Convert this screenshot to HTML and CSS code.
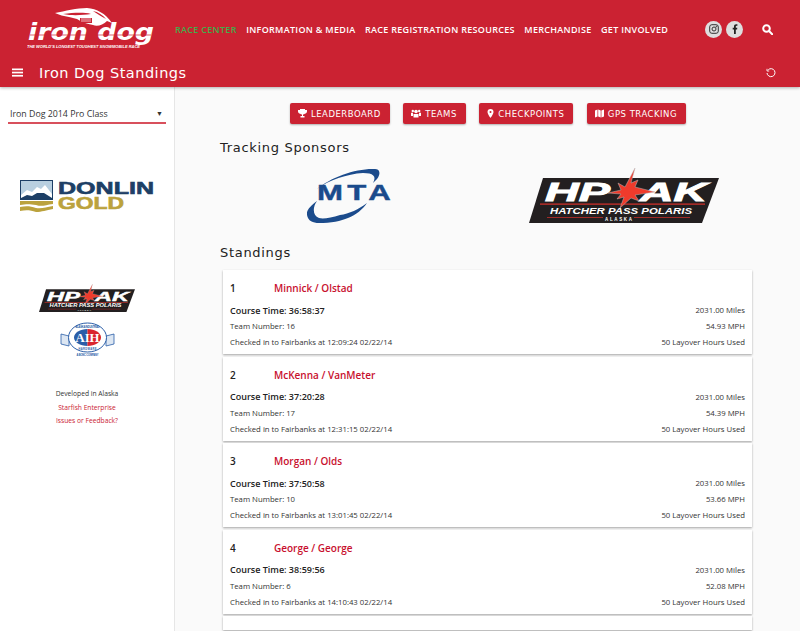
FILE: index.html
```html
<!DOCTYPE html>
<html lang="en">
<head>
  <meta charset="UTF-8" />
  <title>Iron Dog Standings</title>
  <link rel="stylesheet" href="styles.css">
</head>
<body>
  <header class="header">
    <div class="topbar">
      <svg class="logo" width="127" height="42" viewBox="0 -2 127 42">
        <path d="M28 3C38 1 50 -2 60 -2C70 -1 78 3 85 13L80 11C76 15 70 17 66 15C60 14 54 12 50 9L42 7C37 6 32 5 28 3Z" fill="#fff"/>
        <path d="M36 4C46 3 56 2 64 4C56 5 46 6 36 4Z" fill="#cb2232"/>
        <path d="M66 1C71 2 76 5 79 9C74 6 70 4 66 1Z" fill="#cb2232"/>
        <rect x="53" y="8" width="12" height="5" fill="#cb2232"/>
        <path d="M54 9H64M54 11H64" stroke="#fff" stroke-width=".7"/>
        <text x="1" y="30" class="logo-name" textLength="126" lengthAdjust="spacingAndGlyphs">iron dog</text>
        <path d="M3 25H124" stroke="#cb2232" stroke-width=".7"/>
        <text x="0" y="38" class="logo-tag" textLength="113" lengthAdjust="spacingAndGlyphs">THE WORLD'S LONGEST TOUGHEST SNOWMOBILE RACE</text>
      </svg>
      <nav class="nav">
        <a class="nav-link active">RACE CENTER</a>
        <a class="nav-link">INFORMATION &amp; MEDIA</a>
        <a class="nav-link">RACE REGISTRATION RESOURCES</a>
        <a class="nav-link">MERCHANDISE</a>
        <a class="nav-link">GET INVOLVED</a>
      </nav>
      <div class="social">
        <span class="social-dot">
          <svg width="10" height="10" viewBox="0 0 10 10" fill="none" stroke="#333" stroke-width="1"><rect x=".7" y=".7" width="8.600" height="8.600" rx="2.200"/><circle cx="5" cy="5" r="2"/><circle cx="7.500" cy="2.500" r=".4"/></svg>
        </span>
        <span class="social-dot">
          <svg width="10" height="10" viewBox="0 0 10 10" fill="#222"><path d="M4 10V5.500H2.700V3.800H4V2.600C4 1 4.900 .2 6.200 .2H7.400V1.800H6.600C6 1.800 5.800 2.100 5.800 2.600V3.800H7.300L7.100 5.500H5.800V10Z"/></svg>
        </span>
      </div>
      <svg class="search" width="11" height="11" viewBox="0 0 11 11" fill="none" stroke="#fff" stroke-width="2"><circle cx="4.500" cy="4.500" r="3.300"/><path d="M7 7L10.200 10.200" stroke-linecap="round"/></svg>
    </div>
    <div class="subbar">
      <svg class="menu" width="11" height="9" viewBox="0 0 11 9" fill="#fff"><rect y=".5" width="11" height="1.700"/><rect y="3.700" width="11" height="1.700"/><rect y="6.900" width="11" height="1.700"/></svg>
      <h1 class="page-title">Iron Dog Standings</h1>
      <svg class="refresh" width="10" height="10" viewBox="0 0 10 10" fill="none" stroke="#fff" stroke-width="1"><path d="M2.300 1.700A4 4 0 1 1 1 5"/><path d="M1 .8V3H3.200" stroke-width=".9"/></svg>
    </div>
  </header>

  <div class="layout">
    <aside class="sidebar">
      <div class="class-select">
        <span>Iron Dog 2014 Pro Class</span>
        <span class="arrow">▼</span>
      </div>

      <svg class="donlin" width="135" height="33" viewBox="0 0 135 33">
        <rect x=".5" y=".5" width="32" height="19" fill="#b8cfe0" stroke="#1d3f66"/>
        <path d="M1 15L7 10L12 12L17 7L21 9L25 5L32 14V20H1Z" fill="#fff"/>
        <path d="M1 18L7 15L12 16L17 13L24 13L32 18V20H1Z" fill="#1d3f66"/>
        <path d="M0 21H33V24C25 25 22 27 16 25C10 24 6 24 0 25Z" fill="#bba23d"/>
        <path d="M0 27C6 26 10 26 16 28C22 29 26 27 33 26V29C26 30 22 32 16 32C10 30 6 30 0 31Z" fill="#bba23d"/>
        <text x="38" y="14" class="donlin-name" textLength="96" lengthAdjust="spacingAndGlyphs">DONLIN</text>
        <text x="38" y="29" class="donlin-gold" textLength="66" lengthAdjust="spacingAndGlyphs">GOLD</text>
      </svg>

      <svg class="hpak-small" width="96" height="28" viewBox="0 0 190 55">
        <polygon points="14,10 190,10 173,55 0,55" fill="#231f20"/>
        <text x="16" y="33" class="hp-big" textLength="65" lengthAdjust="spacingAndGlyphs">HP</text>
        <text x="111" y="33" class="hp-big" textLength="67" lengthAdjust="spacingAndGlyphs">AK</text>
        <rect x="11" y="35.500" width="165" height="1.200" fill="#d9312b"/>
        <polygon points="106,0 102,15 109,12 106,19 126,24 106,27 110,33 102,30 91,40 95,29 88,31 92,26 79,25 92,22 89,15 96,19" fill="#ef3b2c" stroke="#bbb" stroke-width=".5"/>
        <text x="21" y="46" class="hp-mid" textLength="142" lengthAdjust="spacingAndGlyphs">HATCHER PASS POLARIS</text>
        <rect x="18" y="49" width="56" height=".7" fill="#d9312b"/>
        <rect x="105" y="49" width="56" height=".7" fill="#d9312b"/>
        <text x="76" y="52.500" class="hp-small" textLength="27">ALASKA</text>
      </svg>

      <svg class="aih" width="55" height="34" viewBox="0 0 55 34">
        <path d="M1 12L9 14V24L1 22ZM54 12L46 14V24L54 22Z" fill="#dce6f2" stroke="#2a5ea8" stroke-width=".8"/>
        <ellipse cx="27.500" cy="15.500" rx="19" ry="14.500" fill="#fff" stroke="#2a5ea8"/>
        <path d="M27.500 7C20 7 14 11 14 15.500C14 20 20 24 27.500 24Z" fill="#2a5ea8"/>
        <path d="M27.500 7C35 7 41 11 41 15.500C41 20 35 24 27.500 24Z" fill="#d9262e"/>
        <text x="27.500" y="20" class="aih-text" text-anchor="middle" textLength="24" lengthAdjust="spacingAndGlyphs">AIH</text>
        <text x="27.500" y="5.600" class="aih-ring" text-anchor="middle" textLength="24">ALASKA INDUSTRIAL</text>
        <text x="27.500" y="28" class="aih-ring" text-anchor="middle" textLength="18">HARDWARE</text>
        <text x="27.500" y="33.500" class="aih-ring" text-anchor="middle" textLength="22">A BONC COMPANY</text>
      </svg>

      <div class="credits">
        <p>Developed in Alaska</p>
        <a>Starfish Enterprise</a>
        <a>Issues or Feedback?</a>
      </div>
    </aside>

    <main class="content">
      <div class="tabs">
        <a class="tab">
          <svg width="9" height="9" viewBox="0 0 9 9" fill="#fff"><path d="M2 0H7V1H9V2.500C9 3.800 8 4.500 6.800 4.700C6.400 5.200 5.800 5.500 5 5.600V7H6.500V8.500H2.500V7H4V5.600C3.200 5.500 2.600 5.200 2.200 4.700C1 4.500 0 3.800 0 2.500V1H2Z"/></svg>
          LEADERBOARD
        </a>
        <a class="tab">
          <svg width="10" height="9" viewBox="0 0 10 9" fill="#fff"><circle cx="5" cy="2.500" r="1.800"/><circle cx="1.800" cy="2" r="1.200"/><circle cx="8.200" cy="2" r="1.200"/><path d="M2.500 5H7.500V8.500H2.500Z"/><path d="M0 3.800H2V7H0ZM8 3.800H10V7H8Z"/></svg>
          TEAMS
        </a>
        <a class="tab">
          <svg width="7" height="9" viewBox="0 0 7 9" fill="#fff"><path fill-rule="evenodd" d="M3.500 0A3 3 0 0 1 6.500 3C6.500 5 3.500 9 3.500 9S.5 5 .5 3A3 3 0 0 1 3.500 0ZM3.500 2A1 1 0 1 0 3.500 4A1 1 0 0 0 3.500 2Z"/></svg>
          CHECKPOINTS
        </a>
        <a class="tab">
          <svg width="9" height="9" viewBox="0 0 9 9" fill="#fff"><path d="M0 1.500L2.500 .5V7.500L0 8.500ZM3.200 .5L5.700 1.500V8.500L3.200 7.500ZM6.400 1.500L9 .5V7.500L6.400 8.500Z"/></svg>
          GPS TRACKING
        </a>
      </div>

      <h2 class="section-title first">Tracking Sponsors</h2>
      <div class="sponsors">
        <svg width="89" height="55" viewBox="0 0 89 55">
          <path d="M10 21C24 9 50 0 68 1C73 1 74 6 70 11L66 15C70 8 66 5 56 5C40 6 22 12 10 21Z" fill="#1b4b8c"/>
          <path d="M10 33C3 38 -1 43 0 47C1 53 6 55 12 55C24 55 34 53 41 50C49 47 56 41 60 35C52 41 42 46 33 47C24 50 16 51 12 50C6 48 5 40 10 33Z" fill="#1b4b8c"/>
          <text x="10" y="32" class="mta-text" textLength="78" lengthAdjust="spacingAndGlyphs">MTA</text>
        </svg>
        <svg width="190" height="55" viewBox="0 0 190 55">
          <polygon points="14,10 190,10 173,55 0,55" fill="#231f20"/>
          <text x="16" y="33" class="hp-big" textLength="65" lengthAdjust="spacingAndGlyphs">HP</text>
          <text x="111" y="33" class="hp-big" textLength="67" lengthAdjust="spacingAndGlyphs">AK</text>
          <rect x="11" y="35.500" width="165" height="1.200" fill="#d9312b"/>
          <polygon points="106,0 102,15 109,12 106,19 126,24 106,27 110,33 102,30 91,40 95,29 88,31 92,26 79,25 92,22 89,15 96,19" fill="#ef3b2c" stroke="#bbb" stroke-width=".5"/>
          <text x="21" y="46" class="hp-mid" textLength="142" lengthAdjust="spacingAndGlyphs">HATCHER PASS POLARIS</text>
          <rect x="18" y="49" width="56" height=".7" fill="#d9312b"/>
          <rect x="105" y="49" width="56" height=".7" fill="#d9312b"/>
          <text x="76" y="52.500" class="hp-small" textLength="27">ALASKA</text>
        </svg>
      </div>

      <h2 class="section-title">Standings</h2>

      <section class="card">
        <div class="card-title"><span class="rank">1</span><a class="team">Minnick / Olstad</a></div>
        <div class="card-row"><strong>Course Time: 36:58:37</strong><span>2031.00 Miles</span></div>
        <div class="card-row"><span>Team Number: 16</span><span>54.93 MPH</span></div>
        <div class="card-row"><span>Checked in to Fairbanks at 12:09:24 02/22/14</span><span>50 Layover Hours Used</span></div>
      </section>
      <section class="card">
        <div class="card-title"><span class="rank">2</span><a class="team">McKenna / VanMeter</a></div>
        <div class="card-row"><strong>Course Time: 37:20:28</strong><span>2031.00 Miles</span></div>
        <div class="card-row"><span>Team Number: 17</span><span>54.39 MPH</span></div>
        <div class="card-row"><span>Checked in to Fairbanks at 12:31:15 02/22/14</span><span>50 Layover Hours Used</span></div>
      </section>
      <section class="card">
        <div class="card-title"><span class="rank">3</span><a class="team">Morgan / Olds</a></div>
        <div class="card-row"><strong>Course Time: 37:50:58</strong><span>2031.00 Miles</span></div>
        <div class="card-row"><span>Team Number: 10</span><span>53.66 MPH</span></div>
        <div class="card-row"><span>Checked in to Fairbanks at 13:01:45 02/22/14</span><span>50 Layover Hours Used</span></div>
      </section>
      <section class="card">
        <div class="card-title"><span class="rank">4</span><a class="team">George / George</a></div>
        <div class="card-row"><strong>Course Time: 38:59:56</strong><span>2031.00 Miles</span></div>
        <div class="card-row"><span>Team Number: 6</span><span>52.08 MPH</span></div>
        <div class="card-row"><span>Checked in to Fairbanks at 14:10:43 02/22/14</span><span>50 Layover Hours Used</span></div>
      </section>
      <section class="card card-last"></section>
    </main>
  </div>
</body>
</html>
```

FILE: styles.css
```css
html, body {
  height: 631px;
  overflow: hidden;
}

body {
  margin: 0;
  display: flex;
  flex-direction: column;
  background-color: #fafafa;
  color: #333;
  font-family: "Open Sans", sans-serif;
}

/* header */
.header {
  flex: none;
  height: 87px;
  background-color: #cb2232;
  box-shadow: 0 1px 3px rgba(0, 0, 0, 0.3);
  position: relative;
  z-index: 1;
}

.topbar {
  display: flex;
  align-items: center;
  height: 58px;
}

.logo {
  flex: none;
  margin: 0 21px 0 27px;
}

.logo-name {
  font: italic 700 23px "DejaVu Sans", sans-serif;
  fill: #fff;
}

.logo-tag {
  font: italic 700 4.4px "Liberation Sans", sans-serif;
  fill: #fff;
}

.nav {
  display: flex;
  gap: 9.5px;
  width: 530px;
}

.nav-link {
  color: #fff;
  font-size: 9px;
  font-weight: 600;
  letter-spacing: 0.3px;
  white-space: nowrap;
}

.nav-link.active {
  color: #42ad4a;
}

.social {
  display: flex;
  gap: 4px;
}

.social-dot {
  display: flex;
  align-items: center;
  justify-content: center;
  width: 17px;
  height: 17px;
  border-radius: 50%;
  background-color: #dedede;
}

.search {
  margin-left: 19px;
}

.subbar {
  display: flex;
  align-items: center;
  height: 29px;
  padding: 0 24px 0 12px;
}

.page-title {
  flex: 1;
  margin: 0 0 0 16px;
  color: #fff;
  font: 400 14.5px "DejaVu Sans", sans-serif;
  letter-spacing: 0.5px;
}

/* page body */
.layout {
  flex: 1;
  display: flex;
  min-height: 0;
}

.sidebar {
  flex: none;
  width: 175px;
  box-sizing: border-box;
  padding: 18px 8px 0 8px;
  display: flex;
  flex-direction: column;
  align-items: center;
  background-color: #fff;
  border-right: 1px solid #e6e6e6;
}

.class-select {
  align-self: stretch;
  display: flex;
  justify-content: space-between;
  align-items: center;
  height: 17px;
  padding: 0 3px 0 2px;
  border-bottom: 2px solid #d8505c;
  font-size: 8.8px;
  color: #333;
}

.arrow {
  font-size: 7px;
}

.donlin {
  margin-top: 56px;
}

.donlin-name {
  font: 700 17px "Liberation Sans", sans-serif;
  fill: #1d3f66;
  stroke: #1d3f66;
  stroke-width: 0.6px;
}

.donlin-gold {
  font: 700 17px "Liberation Sans", sans-serif;
  fill: #bba23d;
  stroke: #bba23d;
  stroke-width: 0.6px;
}

.hp-big {
  font: italic 700 25px "Liberation Sans", sans-serif;
  fill: #fff;
  stroke: #fff;
  stroke-width: 0.9px;
}

.hp-mid {
  font: italic 700 9px "Liberation Sans", sans-serif;
  fill: #fff;
}

.hp-small {
  font: 700 4.5px "Liberation Sans", sans-serif;
  fill: #fff;
}

.hpak-small {
  margin-top: 71px;
}

.aih {
  margin-top: 10px;
}

.aih-text {
  font: 700 12px "Liberation Serif", serif;
  fill: #fff;
}

.aih-ring {
  font: 700 2.6px "Liberation Sans", sans-serif;
  fill: #2a5ea8;
}

.credits {
  margin-top: 31px;
  display: flex;
  flex-direction: column;
  align-items: center;
  font-size: 6.7px;
  line-height: 13px;
}

.credits p {
  margin: 0 0 1px;
  color: #333;
}

.credits a {
  color: #cb2232;
}

/* main column */
.content {
  flex: 1;
  min-width: 0;
  padding: 16px 0 0 45px;
}

.tabs {
  display: flex;
  gap: 13.5px;
  margin-left: 70px;
}

.tab {
  display: flex;
  align-items: center;
  gap: 4px;
  height: 21px;
  padding: 0 9px 0 8px;
  border-radius: 2px;
  background-color: #cb2232;
  box-shadow: 0 1px 2px rgba(0, 0, 0, 0.3);
  color: #fff;
  font: 400 8.5px "DejaVu Sans", sans-serif;
  letter-spacing: 0.5px;
  white-space: nowrap;
}

.section-title {
  margin: 21px 0 8px;
  height: 18px;
  color: #222;
  font: 400 13px/18px "DejaVu Sans", sans-serif;
  letter-spacing: 0.7px;
}

.section-title.first {
  margin: 15px 0 11px;
}

.sponsors {
  display: grid;
  grid-template-columns: 262px 284px;
  justify-items: center;
  height: 55px;
}

.mta-text {
  font: 700 22px "Liberation Sans", sans-serif;
  letter-spacing: 3px;
  fill: #1b4b8c;
  stroke: #1b4b8c;
  stroke-width: 0.4px;
}

.card {
  width: 529px;
  height: 84px;
  box-sizing: border-box;
  margin: 0 0 2.5px 3px;
  padding: 10px 7px 0;
  background-color: #fff;
  box-shadow: 0 1px 2px rgba(0, 0, 0, 0.35);
  font-size: 7.75px;
}

.card-last {
  height: 14px;
  margin-bottom: 0;
}

.card-title {
  display: flex;
  height: 16px;
  margin-bottom: 6px;
  align-items: center;
  font-size: 10px;
  font-weight: 600;
  color: #222;
}

.rank {
  width: 44px;
}

.team {
  color: #c8102e;
}

.card-row {
  display: flex;
  justify-content: space-between;
  align-items: center;
  height: 16px;
}

.card-row strong {
  font-size: 9px;
  font-weight: 600;
  color: #222;
}
```
